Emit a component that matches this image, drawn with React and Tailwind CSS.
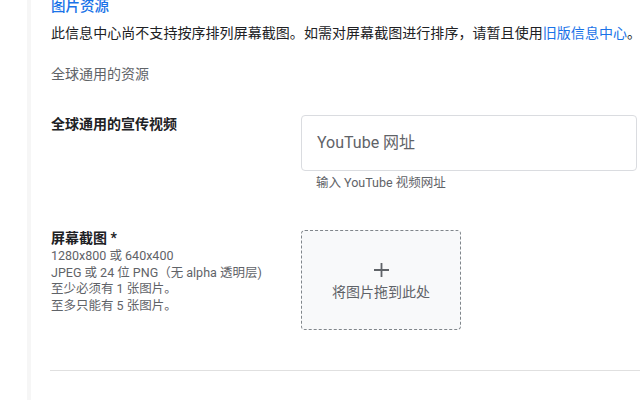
import React from 'react';

const font = { fontFamily: 'Roboto, "Noto Sans CJK SC", sans-serif' };

export default function App() {
  return (
    <div className="flex h-[400px] w-[640px] overflow-hidden bg-white" style={font}>
      <div className="w-[27px] shrink-0 bg-white" />
      <div className="w-[4px] shrink-0 bg-[#f6f6f6]" />
      <div className="flex-1 pl-[20px]">
        <h2 className="mt-[-4px] text-[14.5px] font-medium leading-[22px] text-[#1a73e8]">图片资源</h2>
        <p className="mt-[5px] whitespace-nowrap text-[14px] leading-[20px] tracking-[0.05px] text-[#202124]">
          此信息中心尚不支持按序排列屏幕截图。如需对屏幕截图进行排序，请暂且使用
          <span className="text-[#1a73e8]">旧版信息中心</span>。
        </p>
        <p className="mt-[21px] text-[14px] leading-[20px] text-[#5f6368]">全球通用的资源</p>

        {/* 宣传视频 */}
        <div className="mt-[30px] flex">
          <div className="w-[250px] shrink-0 text-[14px] font-bold leading-[20px] text-[#202124]">
            全球通用的宣传视频
          </div>
          <div>
            <div className="mt-[1px] flex h-[56px] w-[336px] items-center rounded-[4px] border border-[#dadce0] pl-[15px] text-[16px] text-[#5f6368]">
              YouTube 网址
            </div>
            <p className="ml-[15px] mt-[4px] text-[12.5px] leading-[16px] text-[#5f6368]">输入 YouTube 视频网址</p>
          </div>
        </div>

        {/* 屏幕截图 */}
        <div className="mt-[37px] flex">
          <div className="w-[250px] shrink-0">
            <div className="text-[14px] font-bold leading-[20px] text-[#202124]">屏幕截图 *</div>
            <div className="text-[12.5px] leading-[16.5px] text-[#5f6368]">
              <p>1280x800 或 640x400</p>
              <p>JPEG 或 24 位 PNG（无 alpha 透明层)</p>
              <p>至少必须有 1 张图片。</p>
              <p>至多只能有 5 张图片。</p>
            </div>
          </div>
          <div className="mt-[2px] flex h-[100px] w-[160px] flex-col items-center justify-center rounded-[4px] border border-dashed border-[#80868b] bg-[#f8f9fa] pt-[4px] text-[#5f6368]">
            <svg width="15" height="14" viewBox="0 0 15 14">
              <path d="M7.5 0v14M0 7h15" stroke="#5f6368" strokeWidth="1.8" />
            </svg>
            <span className="mt-[6px] text-[14px] leading-[18px]">将图片拖到此处</span>
          </div>
        </div>

        <div className="ml-[-1px] mt-[40px] h-px bg-[#e0e0e0]" />
      </div>
    </div>
  );
}
